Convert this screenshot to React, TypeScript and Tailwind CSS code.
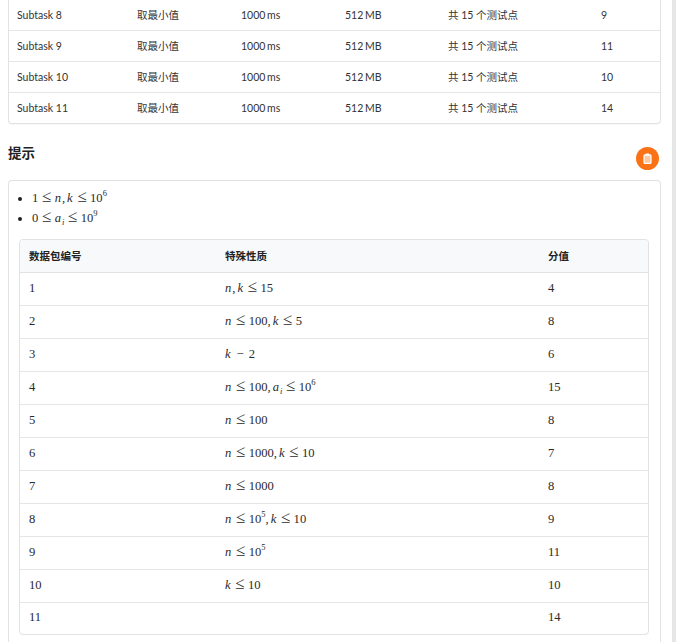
import type { ReactNode } from 'react'

const cjk = '"Lato", "Noto Sans CJK SC", sans-serif'

const subtasks = [
  { name: 'Subtask 8', score: 9 },
  { name: 'Subtask 9', score: 11 },
  { name: 'Subtask 10', score: 10 },
  { name: 'Subtask 11', score: 14 },
]

function V({ children }: { children: ReactNode }) {
  return <i className="pr-[1px] italic">{children}</i>
}

function Le() {
  return <span className="mx-[3.5px] text-[17px] leading-none">≤</span>
}

function Comma() {
  return <span className="mr-[2px]">,</span>
}

function Sup({ children }: { children: ReactNode }) {
  return <sup className="relative -top-[1px] text-[8.5px] leading-none align-super">{children}</sup>
}

function Sub({ children }: { children: ReactNode }) {
  return <sub className="relative -top-[1px] text-[8.5px] italic leading-none align-sub">{children}</sub>
}

function Math({ children }: { children: ReactNode }) {
  return <span className="-mt-[2px] font-['Liberation_Serif',serif] text-[12.6px] text-[#2a2a2a]">{children}</span>
}

const hintRows: { id: string; cond: ReactNode; score: number }[] = [
  { id: '1', cond: <><V>n</V><Comma /><V>k</V><Le />15</>, score: 4 },
  { id: '2', cond: <><V>n</V><Le />100<Comma /><V>k</V><Le />5</>, score: 8 },
  { id: '3', cond: <><V>k</V><span className="mx-[5px]">−</span>2</>, score: 6 },
  { id: '4', cond: <><V>n</V><Le />100<Comma /><V>a</V><Sub>i</Sub><Le />10<Sup>6</Sup></>, score: 15 },
  { id: '5', cond: <><V>n</V><Le />100</>, score: 8 },
  { id: '6', cond: <><V>n</V><Le />1000<Comma /><V>k</V><Le />10</>, score: 7 },
  { id: '7', cond: <><V>n</V><Le />1000</>, score: 8 },
  { id: '8', cond: <><V>n</V><Le />10<Sup>5</Sup><Comma /><V>k</V><Le />10</>, score: 9 },
  { id: '9', cond: <><V>n</V><Le />10<Sup>5</Sup></>, score: 11 },
  { id: '10', cond: <><V>k</V><Le />10</>, score: 10 },
  { id: '11', cond: null, score: 14 },
]

export default function App() {
  return (
    <div className="flex h-[642px] w-[676px] overflow-hidden bg-white text-[#333]" style={{ fontFamily: cjk }}>
      <main className="w-[672px] pl-2 pr-[11px]">
        <div className="rounded-b border-x border-b border-[#e2e2e2] shadow-[0_1px_1px_rgba(0,0,0,0.03)]">
          {subtasks.map((s, i) => (
            <div
              key={s.name}
              className={`grid grid-cols-[120px_104px_104px_103px_153px_1fr] items-center pt-[1px] text-[10.5px] ${
                i < subtasks.length - 1 ? 'h-[31px] border-b border-[#e6e6e6]' : 'h-[30px]'
              }`}
            >
              <span className="pl-2">{s.name}</span>
              <span className="pl-2">取最小值</span>
              <span className="pl-2 [word-spacing:-1px]">1000 ms</span>
              <span className="pl-2 [word-spacing:-1px]">512 MB</span>
              <span className="pl-2">共 15 个测试点</span>
              <span className="pl-2">{s.score}</span>
            </div>
          ))}
        </div>

        <div className="mt-[16px] flex h-[40px] items-start justify-between">
          <h3 className="mt-[3px] text-[13.5px] leading-[20px] font-bold text-[#222]">提示</h3>
          <button
            type="button"
            className="mt-[7px] mr-[2px] flex size-[23px] items-center justify-center rounded-full bg-[#f97316]"
          >
            <svg viewBox="0 0 12 12" className="size-[11px]">
              <rect x="2.2" y="2" width="7.6" height="9.3" rx="1" fill="#fcc9a2" stroke="#fff" strokeWidth="1.3" />
              <rect x="4" y="0.6" width="4" height="2.4" rx="0.5" fill="#fff" />
            </svg>
          </button>
        </div>

        <div className="rounded-t border-x border-t border-[#e2e2e2] pl-[10px] pr-[11px] pt-[7px] pb-4">
          <ul className="list-disc pl-[13px] text-[11px] marker:text-[#222]">
            <li className="h-[20px] leading-[20px]">
              <Math>
                1<Le /><V>n</V><Comma /><V>k</V><Le />10<Sup>6</Sup>
              </Math>
            </li>
            <li className="h-[20px] leading-[20px]">
              <Math>
                0<Le /><V>a</V><Sub>i</Sub><Le />10<Sup>9</Sup>
              </Math>
            </li>
          </ul>

          <div className="mt-[11px] overflow-hidden rounded border border-[#e2e2e2]">
            <div className="grid h-[33px] grid-cols-[196px_323px_1fr] items-center border-b border-[#e2e2e2] bg-[#f8f9fb] pl-[9px] pt-[1px] text-[10.5px] font-bold text-[#222]">
              <span>数据包编号</span>
              <span>特殊性质</span>
              <span>分值</span>
            </div>
            {hintRows.map((r, i) => (
              <div
                key={r.id}
                className={`grid grid-cols-[196px_323px_1fr] items-center pl-[9px] ${
                  i < hintRows.length - 1 ? 'h-[33px] border-b border-[#e6e6e6]' : 'h-[31px]'
                }`}
              >
                <Math>{r.id}</Math>
                <Math>{r.cond}</Math>
                <Math>{r.score}</Math>
              </div>
            ))}
          </div>
        </div>
      </main>
      <div className="w-[4px] bg-[#e6e6e6]" />
    </div>
  )
}
